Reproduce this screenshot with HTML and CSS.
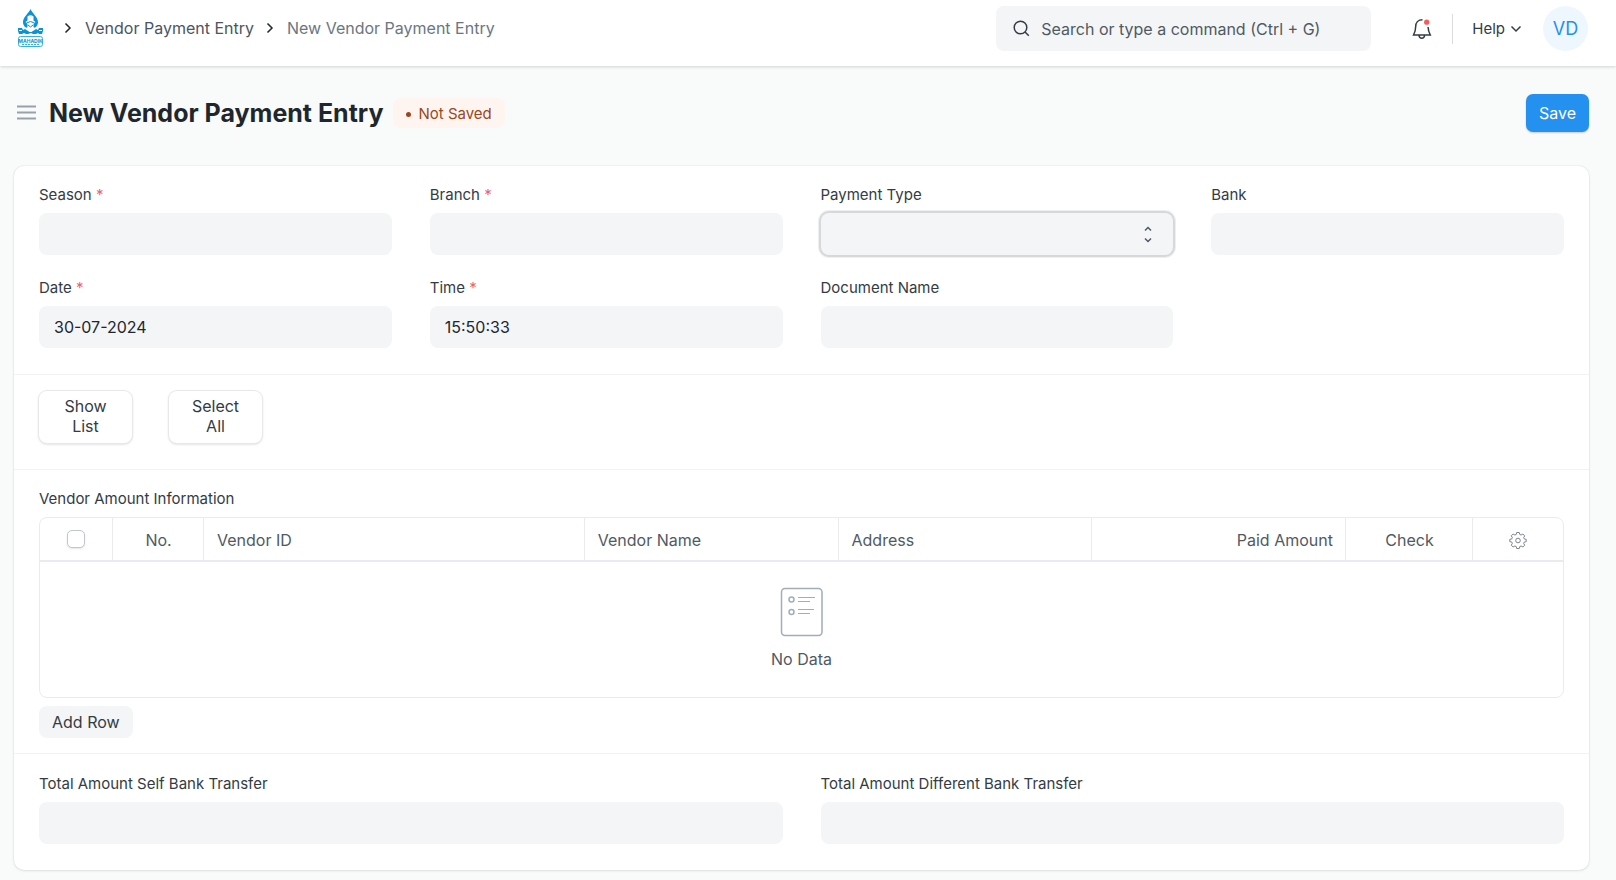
FILE: index.html
```html
<!DOCTYPE html>
<html lang="en">
<head>
<meta charset="utf-8">
<meta name="viewport" content="width=device-width, initial-scale=1">
<title>New Vendor Payment Entry</title>
<link rel="stylesheet" href="styles.css">
</head>
<body>
<header class="navbar">
  <nav class="crumbs" aria-label="Breadcrumb">
    <a class="logo" href="#" aria-label="Mahadik home">
      <svg width="26" height="38" viewBox="0 0 26 38">
        <path d="M12.500 0C14 4 20 8 20 13c0 4-3 7-7.500 7S5 17 5 13c0-5 6-9 7.500-13z" fill="#0b93d8"/>
        <path d="M9.500 7.500q3-2.500 6 0v4l2 1.500-2 2v3l3 2h-12l3-2v-3l-2-2 2-1.500z" fill="#fff"/>
        <path d="M8.500 14l4-1.500 4 1.500M10 16l2.500 2 2.500-2" fill="none" stroke="#0b93d8"/>
        <path d="M0 19h4l1 2 2-1 3 2 2 1h1l2-1 3-2 2 1 1-2h4v3l-1 3h-3l-1-1-2 1h-3l-2-1-3 1H8l-2-1-2 1H1l-1-3z" fill="#0b93d8"/>
        <path d="M8 19l4 4M17 19l-4 4M1 21.500h3M21 21.500h3" stroke="#fff"/>
        <rect x="0.500" y="27.500" width="24" height="10" rx="2" fill="#fff" stroke="#3caee6"/>
        <text x="12.500" y="33.500" class="logo-name">MAHADIK</text>
        <path d="M4 35.500h18" stroke="#3caee6" stroke-dasharray="2 1"/>
      </svg>
    </a>
    <svg class="sep" width="8" height="12" viewBox="0 0 8 12"><path d="M1.500 1.500L6 6l-4.500 4.500"/></svg>
    <a href="#">Vendor Payment Entry</a>
    <svg class="sep" width="8" height="12" viewBox="0 0 8 12"><path d="M1.500 1.500L6 6l-4.500 4.500"/></svg>
    <a class="current" href="#">New Vendor Payment Entry</a>
  </nav>
  <div class="nav-right">
    <label class="search">
      <svg width="17" height="17" viewBox="0 0 17 17"><circle cx="7.500" cy="7.500" r="6.300"/><path d="M12 12L15.800 15.800"/></svg>
      <input type="text" placeholder="Search or type a command (Ctrl + G)" aria-label="Search">
    </label>
    <button class="bell" type="button" aria-label="Notifications">
      <svg width="20" height="22" viewBox="0 0 20 22"><path d="M10.500 1.800C6 1.800 3.700 5 3.700 8.500c0 4-.7 5.500-2.200 8.500h16.800c-1.500-3-2.200-4.500-2.200-8M7 17.500c.4 3.600 5.200 3.600 5.600 0"/><circle cx="14.700" cy="4.200" r="2.600" class="dot"/></svg>
    </button>
    <span class="rule"></span>
    <button class="help" type="button">Help
      <svg width="12" height="8" viewBox="0 0 12 8"><path d="M1.500 1.500L6 6l4.500-4.500"/></svg>
    </button>
    <button class="avatar" type="button">VD</button>
  </div>
</header>
<div class="page-head">
  <button class="menu" type="button" aria-label="Toggle sidebar">
    <svg width="20" height="16" viewBox="0 0 20 16"><path d="M1 1.500h19M1 7.500h19M1 13.500h19"/></svg>
  </button>
  <h1>New Vendor Payment Entry</h1>
  <span class="badge">Not Saved</span>
  <button class="save" type="button">Save</button>
</div>
<main class="card">
  <section class="fields">
    <div class="field"><label for="season">Season <i>*</i></label><input id="season" type="text"></div>
    <div class="field"><label for="branch">Branch <i>*</i></label><input id="branch" type="text"></div>
    <div class="field"><label for="ptype">Payment Type</label>
      <div class="select-wrap">
        <select id="ptype" class="focused"><option></option></select>
        <svg width="8" height="18" viewBox="0 0 8 18"><path d="M1 5.500l3-3 3 3M1 13.500l3 3 3-3"/></svg>
      </div>
    </div>
    <div class="field"><label for="bank">Bank</label><input id="bank" type="text"></div>
    <div class="field"><label for="date">Date <i>*</i></label><input id="date" type="text" value="30-07-2024"></div>
    <div class="field"><label for="time">Time <i>*</i></label><input id="time" type="text" value="15:50:33"></div>
    <div class="field"><label for="doc">Document Name</label><input id="doc" type="text"></div>
  </section>
  <section class="actions">
    <button type="button">Show List</button>
    <button type="button">Select All</button>
  </section>
  <section class="grid-section">
    <h2>Vendor Amount Information</h2>
    <div class="table-frame">
      <table>
        <colgroup><col class="c-tick"><col class="c-no"><col class="c-id"><col class="c-mid"><col class="c-mid"><col class="c-mid"><col class="c-check"><col class="c-gear"></colgroup>
        <thead>
          <tr>
            <th class="center"><input type="checkbox" aria-label="Select all rows"></th>
            <th class="center">No.</th>
            <th>Vendor ID</th>
            <th>Vendor Name</th>
            <th>Address</th>
            <th class="right">Paid Amount</th>
            <th class="center">Check</th>
            <th class="center"><button class="gear" type="button" aria-label="Configure columns">
              <svg width="18" height="18" viewBox="0 0 18 18"><path d="M7.700 1.500h2.600l.5 2 1.300.5 1.800-1 1.800 1.800-1 1.800.5 1.300 2 .5v2.200l-2 .5-.5 1.300 1 1.800-1.800 1.800-1.800-1-1.300.5-.5 2H7.700l-.5-2-1.300-.5-1.800 1-1.800-1.800 1-1.800-.5-1.300-2-.5V8.400l2-.5.5-1.300-1-1.800L4.100 3l1.800 1 1.300-.5z"/><circle cx="9" cy="9.500" r="2.300"/></svg>
            </button></th>
          </tr>
        </thead>
        <tbody>
          <tr><td colspan="8">
            <svg class="empty" width="44" height="50" viewBox="0 0 44 50"><rect x="1.500" y="1.500" width="40.500" height="47" rx="3.500"/><circle cx="11.500" cy="12.500" r="2.500"/><circle cx="11.500" cy="25" r="2.500"/><path d="M18 10.500h17M18 14.500h12M18 22.500h16M18 26.500h12" class="thin"/></svg>
            <p>No Data</p>
          </td></tr>
        </tbody>
      </table>
    </div>
    <button class="add" type="button">Add Row</button>
  </section>
  <section class="fields totals">
    <div class="field"><label for="self">Total Amount Self Bank Transfer</label><input id="self" type="text"></div>
    <div class="field"><label for="diff">Total Amount Different Bank Transfer</label><input id="diff" type="text"></div>
  </section>
</main>
</body>
</html>
```
FILE: styles.css
```css
* { box-sizing: border-box; }
body {
  margin: 0;
  background: #f9fafa;
  color: #333c44;
  font: 400 16px/20px Inter, "Liberation Sans", sans-serif;
}
button, input, select { font: inherit; color: inherit; border: 0; margin: 0; }
button { background: none; padding: 0; cursor: pointer; }
a { color: inherit; text-decoration: none; }
svg { display: block; flex: none; fill: none; stroke: #333c44; stroke-width: 1.5; }
.navbar {
  display: flex;
  justify-content: space-between;
  align-items: flex-start;
  height: 66px;
  padding: 6px 28px 0 18px;
  background: #fff;
  box-shadow: 0 1px 3px rgba(0, 0, 0, 0.16);
}
.crumbs { display: flex; align-items: center; height: 44px; gap: 12px; color: #4c5560; }
.crumbs .current { color: #6b7681; }
.logo { margin-right: 8px; }
.logo svg { stroke: none; stroke-width: 1; }
.logo-name { font: 700 5px Inter, sans-serif; fill: #0b93d8; text-anchor: middle; }
.sep { margin: 0 1px 0 0; stroke: #1f272e; }
.nav-right { display: flex; align-items: center; }
.search {
  display: flex;
  align-items: center;
  gap: 11px;
  width: 375px;
  height: 45px;
  padding: 0 17px;
  border-radius: 8px;
  background: #f4f5f6;
}
.search input { flex: 1; min-width: 0; padding: 0; background: none; outline: 0; }
.search input::placeholder { color: #505a62; opacity: 1; }
.bell { margin-left: 41px; }
.bell .dot { fill: #ff5858; stroke: none; }
.rule { width: 1px; height: 30px; margin: 0 19px 0 20px; background: #d9dcdf; }
.help { display: flex; align-items: center; gap: 5px; font-size: 15px; }
.avatar {
  width: 45px;
  height: 45px;
  margin-left: 21px;
  border-radius: 50%;
  background: #eff7fe;
  color: #2490ef;
  font-size: 18px;
}
.page-head {
  display: flex;
  align-items: center;
  height: 94px;
  padding: 0 27px 0 16px;
}
.menu svg { stroke: #98a1a9; stroke-width: 2; }
h1 { margin: 0 10px 0 13px; color: #1f272e; font-size: 25px; line-height: 30px; font-weight: 700; }
.badge {
  display: flex;
  align-items: center;
  gap: 7px;
  padding: 6px 13px 4px;
  border-radius: 8px;
  background: #fff5f0;
  color: #9c4621;
  font-size: 15px;
}
.badge::before { content: ""; width: 5px; height: 5px; border-radius: 50%; background: #9c4621; }
.save {
  height: 38px;
  margin-left: auto;
  padding: 0 13px;
  border-radius: 7px;
  background: #2490ef;
  color: #fff;
  box-shadow: 0 1px 2px rgba(0, 0, 0, 0.2);
}
.card {
  margin: 6px 27px 10px 14px;
  border-radius: 10px;
  background: #fff;
  box-shadow: 0 0 2px rgba(0, 0, 0, 0.12), 0 1px 3px rgba(0, 0, 0, 0.08);
}
.card section { padding: 0 25px; }
.card section + section { border-top: 1px solid #f1f2f4; }
.card .fields {
  display: grid;
  grid-template-columns: repeat(4, 1fr);
  gap: 23px 38px;
  padding: 19px 25px 26px;
}
.card .totals { grid-template-columns: repeat(2, 1fr); padding-top: 20px; }
.field { display: flex; flex-direction: column; gap: 8px; min-width: 0; }
.field label { font-size: 15px; line-height: 20px; }
.field i { color: #f0616d; font-style: normal; }
.field input, .field select {
  width: 100%;
  height: 42px;
  padding: 0 15px;
  border-radius: 8px;
  background: #f4f5f6;
  color: #1f272e;
  appearance: none;
  outline: 0;
}
.select-wrap { display: grid; align-items: center; }
.select-wrap > * { grid-area: 1 / 1; }
.select-wrap svg { justify-self: end; margin-right: 21px; pointer-events: none; stroke: #4c5a67; }
.field .focused { box-shadow: 0 0 0 2px #d6d8da, 0 0 0 3px #eeeff0; }
.card .actions { display: flex; gap: 37px; padding-top: 16px; padding-bottom: 26px; }
.actions button {
  width: 93px;
  height: 52px;
  padding: 0 20px 3px;
  border-radius: 8px;
  background: #fff;
  box-shadow: 0 0 0 1px #e6e8ea, 0 1px 3px rgba(0, 0, 0, 0.2);
}
.card .grid-section { padding-top: 19px; padding-bottom: 15px; }
h2 { margin: 0 0 8px; font-size: 15px; line-height: 20px; font-weight: 400; }
.table-frame { border: 1px solid #e9ecef; border-radius: 8px; }
table { width: 100%; table-layout: fixed; border-collapse: separate; border-spacing: 0; color: #505a62; }
.c-tick { width: 73px; }
.c-no { width: 91px; }
.c-id { width: 25%; }
.c-mid { width: 16.66%; }
.c-check { width: 127px; }
.c-gear { width: 90px; }
th {
  height: 44px;
  padding: 2px 12px 0 13px;
  border-bottom: 2px solid #e9ecef;
  border-right: 1px solid #e9ecef;
  font-weight: 400;
  text-align: left;
}
th:first-child { padding: 0; }
th:last-child { border-right: 0; }
.center { text-align: center; }
.right { text-align: right; }
th input {
  display: block;
  width: 18px;
  height: 18px;
  margin: 0 auto;
  border: 1px solid #c0c6cc;
  border-radius: 5px;
  background: #fff;
  appearance: none;
  box-shadow: 0 1px 2px rgba(0, 0, 0, 0.1);
}
.gear { display: block; margin: 0 auto; }
.gear svg { stroke: #7c858c; stroke-width: 1; }
td { padding: 25px 0 28px; text-align: center; }
.empty { margin: 0 auto 12px; stroke: #a3adb7; }
.empty .thin { stroke-width: 1; }
p { margin: 0; }
.add {
  display: block;
  height: 32px;
  margin-top: 8px;
  padding: 0 13px;
  border-radius: 8px;
  background: #f4f5f6;
}
```
